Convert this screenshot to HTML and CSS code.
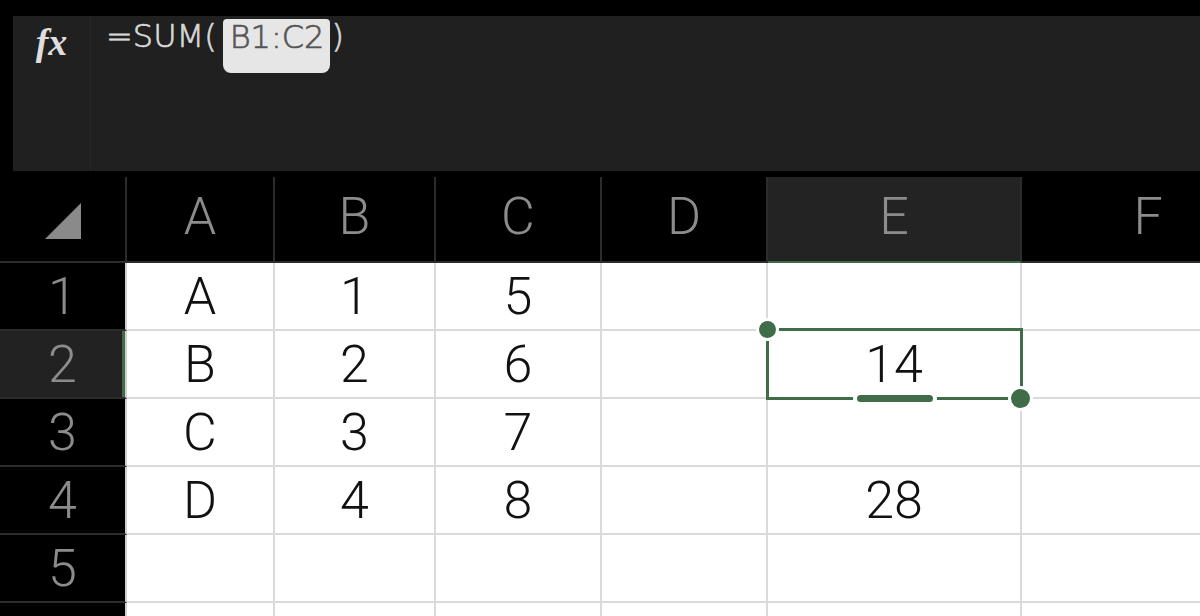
FILE: index.html
```html
<!DOCTYPE html>
<html>
<head>
  <meta name="viewport" content="width=device-width, initial-scale=1">
  <link rel="stylesheet" href="styles.css">
</head>
<body>
  <div class="formula-bar">
    <div class="fx">fx</div>
    <div class="formula">
      <span>=SUM(</span><span class="ref">B1:C2</span><span>)</span>
    </div>
  </div>

  <div class="sheet">
    <!-- header row -->
    <div class="corner">
      <svg width="36" height="36" viewBox="0 0 36 36"><polygon points="36,0 36,36 0,36" fill="#8a8a8a"/></svg>
    </div>
    <div class="col-head">A</div>
    <div class="col-head">B</div>
    <div class="col-head">C</div>
    <div class="col-head">D</div>
    <div class="col-head active">E</div>
    <div class="col-head">F</div>

    <div class="row-head">1</div>
    <div class="cell">A</div>
    <div class="cell">1</div>
    <div class="cell">5</div>
    <div class="cell"></div>
    <div class="cell"></div>
    <div class="cell"></div>

    <div class="row-head active">2</div>
    <div class="cell">B</div>
    <div class="cell">2</div>
    <div class="cell">6</div>
    <div class="cell"></div>
    <div class="cell selected">
      14
      <div class="sel">
        <span class="handle top-left"></span>
        <span class="grip"></span>
        <span class="handle bottom-right"></span>
      </div>
    </div>
    <div class="cell"></div>

    <div class="row-head">3</div>
    <div class="cell">C</div>
    <div class="cell">3</div>
    <div class="cell">7</div>
    <div class="cell"></div>
    <div class="cell"></div>
    <div class="cell"></div>

    <div class="row-head">4</div>
    <div class="cell">D</div>
    <div class="cell">4</div>
    <div class="cell">8</div>
    <div class="cell"></div>
    <div class="cell">28</div>
    <div class="cell"></div>

    <div class="row-head">5</div>
    <div class="cell"></div>
    <div class="cell"></div>
    <div class="cell"></div>
    <div class="cell"></div>
    <div class="cell"></div>
    <div class="cell"></div>

    <!-- next row, only its top edge is on screen -->
    <div class="row-head"></div>
    <div class="cell"></div>
    <div class="cell"></div>
    <div class="cell"></div>
    <div class="cell"></div>
    <div class="cell"></div>
    <div class="cell"></div>
  </div>
</body>
</html>
```

FILE: styles.css
```css
body {
  margin: 0;
  padding: 0;
  background-color: #000;
  font-family: Roboto, "Liberation Sans", sans-serif;
  width: 1200px;
  height: 616px;
  overflow: hidden;
}

/* formula bar */
.formula-bar {
  display: flex;
  height: 155px;
  margin: 16px 0 6px 13px;
  background-color: #202020;
}
.fx {
  width: 78px;
  border-right: 1px solid #282828;
  text-align: center;
  padding-top: 7px;
  box-sizing: border-box;
  font-family: "Liberation Serif", serif;
  font-style: italic;
  font-weight: bold;
  font-size: 38px;
  line-height: 38px;
  color: #dedede;
}
.formula {
  display: flex;
  align-items: flex-start;
  padding: 4px 0 0 15px;
  font-family: "DejaVu Sans", sans-serif;
  font-size: 32px;
  font-weight: 200;
  line-height: 32px;
  color: #d8d8d8;
  -webkit-text-stroke: 0.7px currentColor;
}
.formula .ref {
  margin: -1px 1px 0 6px;
  padding: 2px 6px 20px 7px;
  background-color: #e6e6e6;
  color: #555;
  border-radius: 4px 4px 8px 8px;
}

/* grid */
.sheet {
  display: grid;
  grid-template-columns: 127px 148px 161px 166px 166px 254px 254px;
  grid-template-rows: 86px repeat(6, 68px);
  font-size: 52px;
  font-weight: 300;
}
.sheet > div {
  box-sizing: border-box;
  display: flex;
  align-items: center;
  justify-content: center;
}
.corner {
  border-right: 2px solid #2c2c2c;
  border-bottom: 2px solid #2c2c2c;
  padding-top: 4px;
}
.col-head {
  color: #8c8c8c;
  border-right: 2px solid #2c2c2c;
  border-bottom: 2px solid #2c2c2c;
  padding-bottom: 6px;
}
.col-head.active {
  background-color: #232323;
  border-bottom-color: #3e6d47;
}
.row-head {
  color: #8c8c8c;
  border-right: 2px solid #cfcfcf;
  border-bottom: 2px solid #2c2c2c;
}
.row-head.active {
  background-color: #222;
  box-shadow: inset -3px 0 0 #3e6d47;
}
.cell {
  background-color: #fff;
  color: #111;
  border-right: 2px solid #dadada;
  border-bottom: 2px solid #dadada;
}

/* selection */
.cell.selected {
  position: relative;
}
.sel {
  position: absolute;
  left: -2px;
  top: -3px;
  right: -3px;
  bottom: -3px;
  border: 3px solid #3e6d47;
}
.handle {
  position: absolute;
  border-radius: 50%;
  background-color: #3e6d47;
  box-shadow: 0 0 0 3px #fff;
}
.handle.top-left {
  width: 17px;
  height: 17px;
  left: -10px;
  top: -10px;
}
.handle.bottom-right {
  width: 19px;
  height: 19px;
  right: -10px;
  bottom: -11px;
}
.grip {
  position: absolute;
  left: 88px;
  bottom: -5px;
  width: 76px;
  height: 7px;
  border-radius: 4px;
  background-color: #3e6d47;
  box-shadow: -4px 0 0 #fff, 4px 0 0 #fff;
}
```
